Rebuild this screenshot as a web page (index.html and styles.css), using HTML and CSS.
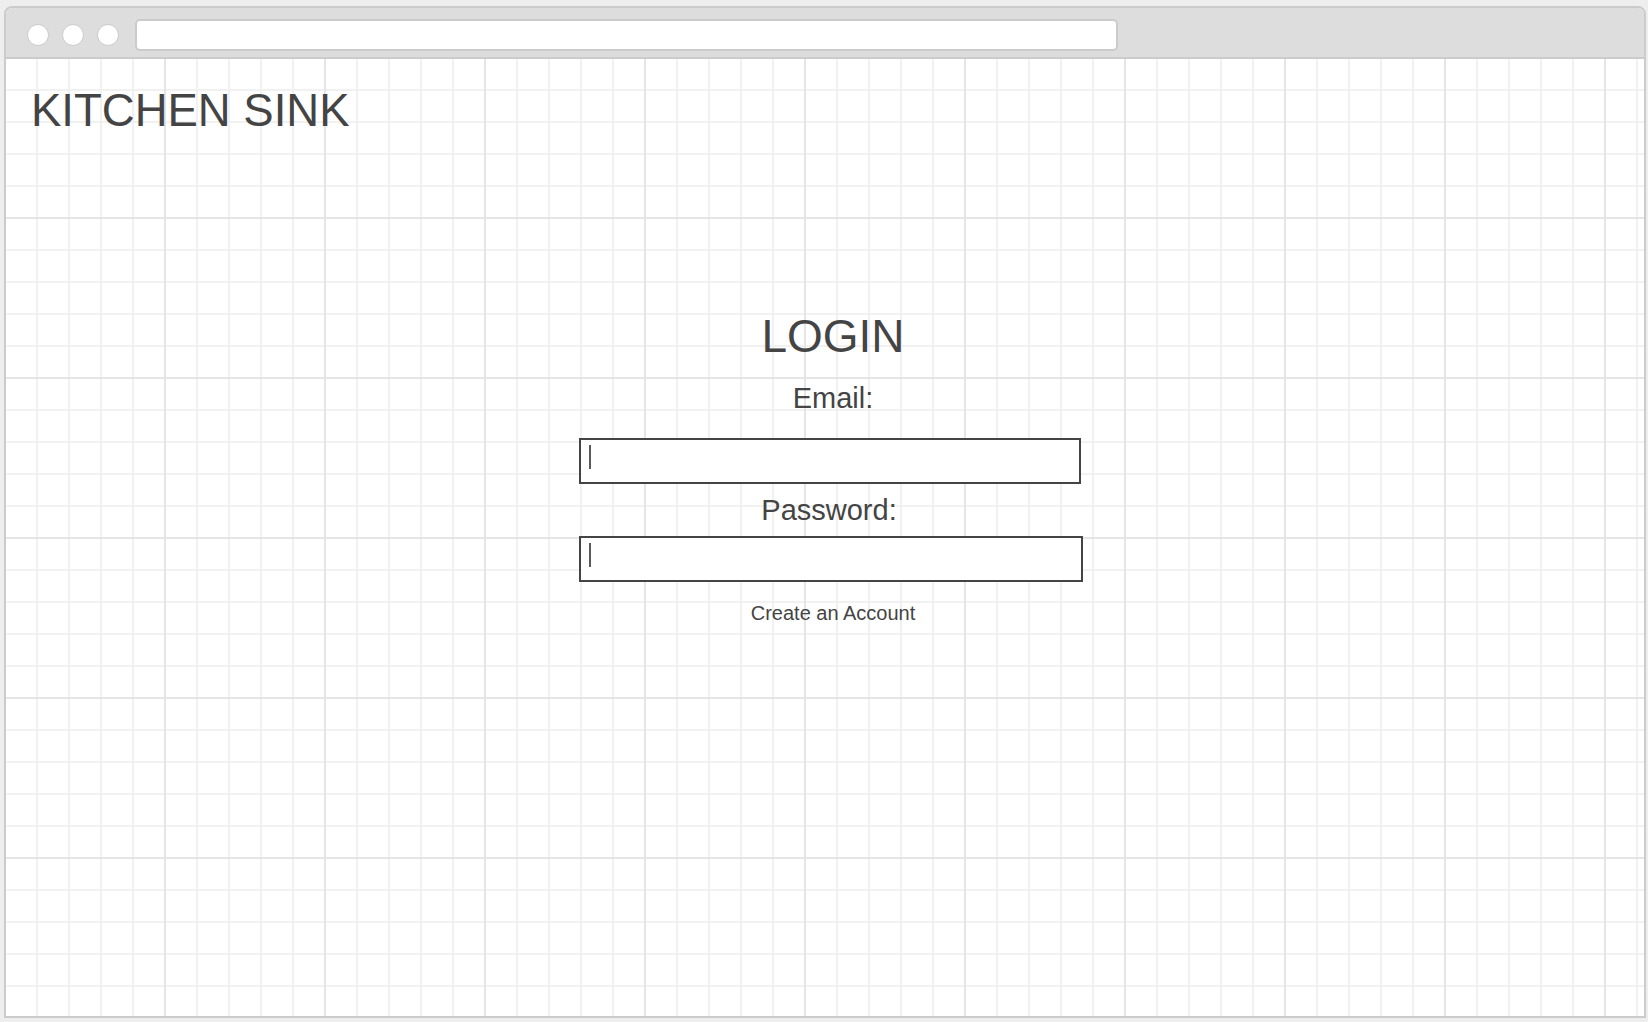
FILE: index.html
```html
<!DOCTYPE html>
<html lang="en">
<head>
<meta charset="utf-8">
<title>Kitchen Sink - Login</title>
<link rel="stylesheet" href="styles.css">
</head>
<body>
<div class="window">
  <div class="titlebar">
    <span class="dot"></span>
    <span class="dot"></span>
    <span class="dot"></span>
    <div class="urlbar"></div>
  </div>
  <div class="canvas">
    <h1 class="brand">KITCHEN SINK</h1>
    <form class="login">
      <h2 class="login-title">LOGIN</h2>
      <label class="field-label">Email:</label>
      <div class="field field-email"><span class="caret"></span></div>
      <label class="field-label field-label-pw">Password:</label>
      <div class="field field-pw"><span class="caret"></span></div>
      <a class="create">Create an Account</a>
    </form>
  </div>
</div>
</body>
</html>
```

FILE: styles.css
```css
html, body {
  margin: 0;
  padding: 0;
}

body {
  background: #eeeeee;
  width: 1648px;
  height: 1022px;
  overflow: hidden;
  font-family: "Liberation Sans", Arial, sans-serif;
  color: #444444;
}

.window {
  box-sizing: border-box;
  margin: 6px 0 0 4px;
  width: 1642px;
  height: 1012px;
  border: 2px solid #cbcbcb;
  border-radius: 8px 8px 0 0;
  background: #ffffff;
  display: flex;
  flex-direction: column;
  overflow: hidden;
}

.titlebar {
  flex: none;
  box-sizing: border-box;
  height: 51px;
  background: #dddddd;
  border-bottom: 2px solid #cbcbcb;
  display: flex;
  align-items: flex-start;
  padding: 11px 0 0 21px;
}

.dot {
  box-sizing: border-box;
  width: 22px;
  height: 22px;
  margin-top: 5px;
  margin-right: 13px;
  border-radius: 50%;
  background: #ffffff;
  border: 1.5px solid #cbcbcb;
}

.dot:nth-child(3) {
  margin-right: 16px;
}

.urlbar {
  box-sizing: border-box;
  width: 983px;
  height: 32px;
  background: #ffffff;
  border: 2px solid #cbcbcb;
  border-radius: 5px;
}

.canvas {
  flex: 1;
  background-color: #ffffff;
  background-image:
    linear-gradient(to right, #e5e5e5 2px, transparent 2px),
    linear-gradient(to bottom, #e5e5e5 2px, transparent 2px),
    linear-gradient(to right, #f1f1f1 2px, transparent 2px),
    linear-gradient(to bottom, #f1f1f1 2px, transparent 2px);
  background-size: 160px 160px, 160px 160px, 32px 32px, 32px 32px;
  background-position: -2px -2px;
  display: flex;
  flex-direction: column;
  align-items: flex-start;
}

.brand {
  margin: 26px 0 0 25px;
  font-size: 45.5px;
  line-height: 52px;
  font-weight: normal;
  color: #444444;
}

.login {
  margin: 173px 0 0 573px;
  width: 508px;
  display: flex;
  flex-direction: column;
  align-items: center;
}

.login-title {
  margin: 0;
  font-size: 46px;
  line-height: 52px;
  font-weight: normal;
  color: #444444;
}

.field-label {
  font-size: 29px;
  line-height: 34px;
  color: #444444;
}

.login-title + .field-label {
  margin-top: 19px;
}

.field {
  align-self: flex-start;
  box-sizing: border-box;
  height: 46px;
  border: 2px solid #444444;
  background: #ffffff;
  padding: 5px 0 0 8px;
  display: flex;
  align-items: flex-start;
}

.field-email {
  width: 502px;
  margin-top: 23px;
}

.field-pw {
  width: 504px;
  margin-top: 9px;
}

.field-label-pw {
  margin-top: 9px;
  margin-right: 8px;
}

.caret {
  display: block;
  width: 2px;
  height: 24px;
  background: #5a5a5a;
}

.create {
  margin-top: 19px;
  font-size: 20px;
  line-height: 24px;
  color: #444444;
  text-decoration: none;
}
```
